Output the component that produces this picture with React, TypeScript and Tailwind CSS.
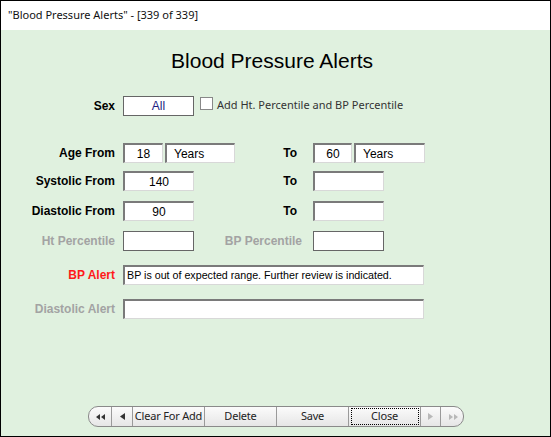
import React from 'react';

const arial = { fontFamily: '"Liberation Sans", Arial, sans-serif' };
const ui = { fontFamily: '"Noto Sans", "Open Sans", sans-serif' };

function Field({ w, children, align = 'center', className = '' }: { w: string; children?: React.ReactNode; align?: 'center' | 'left'; className?: string }) {
  return (
    <div
      className={`${w} h-[20px] bg-white border-t-2 border-l-2 border-t-[#7a7a7a] border-l-[#7a7a7a] border-r border-b border-r-[#d8d8d8] border-b-[#d8d8d8] flex items-center whitespace-nowrap text-black ${align === 'center' ? 'justify-center' : 'justify-start'} ${className}`}
      style={arial}
    >
      {children}
    </div>
  );
}

function Label({ children, color = 'text-black' }: { children: React.ReactNode; color?: string }) {
  return (
    <div className={`w-[114px] text-right font-bold text-[12px] whitespace-nowrap ${color}`} style={arial}>
      {children}
    </div>
  );
}

function Seg({ w, children, focus = false, last = false, dim = false }: { w: string; children: React.ReactNode; focus?: boolean; last?: boolean; dim?: boolean }) {
  return (
    <div className={`${w} h-full shrink-0 flex items-center justify-center whitespace-nowrap ${last ? '' : 'border-r border-[#9a9a9a]'} ${dim ? 'text-[#b0b0b0]' : 'text-[#222]'}`}>
      {focus ? (
        <div className="w-[68px] h-[17px] border border-dotted border-black flex items-center justify-center">{children}</div>
      ) : (
        children
      )}
    </div>
  );
}

export default function App() {
  return (
    <div className="w-[551px] h-[437px] border border-black flex flex-col overflow-hidden">
      <div className="h-[29px] bg-white flex items-center pl-[7px] text-[11px] text-[#111]" style={ui}>
        "Blood Pressure Alerts" - [339 of 339]
      </div>
      <div className="flex-1 bg-[#e0f1df] flex flex-col">
        <h1 className="mt-[19px] pr-[7px] text-center text-[21px] leading-[24px] text-black" style={arial}>
          Blood Pressure Alerts
        </h1>

        {/* Sex */}
        <div className="mt-[23px] flex items-center h-[20px]">
          <Label>Sex</Label>
          <div className="ml-[8px] w-[71px] h-[20px] bg-white border border-[#666] flex items-center justify-center text-[12px] text-[#1c1c80]" style={arial}>
            All
          </div>
          <div className="ml-[6px] w-[13px] h-[13px] border border-[#888] bg-white self-start mt-[1px]" />
          <span className="ml-[4px] text-[11px] text-[#333] -mt-[2px] whitespace-nowrap" style={ui}>
            Add Ht. Percentile and BP Percentile
          </span>
        </div>

        {/* Age */}
        <div className="mt-[27px] flex items-center">
          <Label>Age From</Label>
          <div className="ml-[8px] flex gap-[2px]">
            <Field w="w-[40px]" className="text-[12px] text-[#2a1050]">18</Field>
            <Field w="w-[70px]" align="left" className="text-[12px] pl-[7px]">Years</Field>
          </div>
          <div className="w-[78px] flex justify-end pr-[16px] font-bold text-[12px]" style={arial}>To</div>
          <div className="flex gap-[2px]">
            <Field w="w-[39px]" className="text-[12px]">60</Field>
            <Field w="w-[71px]" align="left" className="text-[12px] pl-[7px]">Years</Field>
          </div>
        </div>

        {/* Systolic */}
        <div className="mt-[8px] flex items-center">
          <Label>Systolic From</Label>
          <div className="ml-[8px]">
            <Field w="w-[71px]" className="text-[12px]">140</Field>
          </div>
          <div className="w-[119px] flex justify-end pr-[16px] font-bold text-[12px]" style={arial}>To</div>
          <Field w="w-[71px]" />
        </div>

        {/* Diastolic */}
        <div className="mt-[10px] flex items-center">
          <Label>Diastolic From</Label>
          <div className="ml-[8px]">
            <Field w="w-[71px]" className="text-[12px]">90</Field>
          </div>
          <div className="w-[119px] flex justify-end pr-[16px] font-bold text-[12px]" style={arial}>To</div>
          <Field w="w-[71px]" />
        </div>

        {/* Percentiles */}
        <div className="mt-[10px] flex items-center">
          <Label color="text-[#a3a3a3]">Ht Percentile</Label>
          <div className="ml-[8px] w-[71px] h-[20px] bg-white border border-[#666]" />
          <div className="w-[119px] flex justify-end pr-[11px] font-bold text-[12px] text-[#a3a3a3] whitespace-nowrap" style={arial}>BP Percentile</div>
          <div className="w-[71px] h-[20px] bg-white border border-[#666]" />
        </div>

        {/* BP Alert */}
        <div className="mt-[14px] flex items-center">
          <Label color="text-[#ff1a1a]">BP Alert</Label>
          <div className="ml-[8px]">
            <Field w="w-[301px]" align="left" className="pl-[2px] text-[10.7px]">
              BP is out of expected range. Further review is indicated.
            </Field>
          </div>
        </div>

        {/* Diastolic Alert */}
        <div className="mt-[14px] flex items-center">
          <Label color="text-[#a3a3a3]">Diastolic Alert</Label>
          <div className="ml-[8px]">
            <Field w="w-[301px]" />
          </div>
        </div>

        {/* Nav bar */}
        <div className="mt-auto mb-[9px] ml-[87px] w-[376px] h-[21px] rounded-[10px] border border-[#8a8a8a] bg-gradient-to-b from-[#fbfbfb] to-[#e6e6e6] flex overflow-hidden text-[11px] tracking-[-0.2px]" style={ui}>
          <Seg w="w-[23px]">
            <svg width="9" height="6" viewBox="0 0 9 6"><path d="M4 0v6L0 3zM9 0v6L5 3z" fill="#333" /></svg>
          </Seg>
          <Seg w="w-[21px]">
            <svg width="5" height="7" viewBox="0 0 5 7"><path d="M5 0v7L0 3.5z" fill="#333" /></svg>
          </Seg>
          <Seg w="w-[72px]">Clear For Add</Seg>
          <Seg w="w-[72px]">Delete</Seg>
          <Seg w="w-[72px]">Save</Seg>
          <Seg w="w-[72px]" focus>Close</Seg>
          <Seg w="w-[20px]" dim>
            <svg width="5" height="7" viewBox="0 0 5 7"><path d="M0 0v7L5 3.5z" fill="#b8b8b8" /></svg>
          </Seg>
          <Seg w="w-[24px]" last dim>
            <svg width="9" height="6" viewBox="0 0 9 6"><path d="M0 0v6L4 3zM5 0v6L9 3z" fill="#b8b8b8" /></svg>
          </Seg>
        </div>
      </div>
    </div>
  );
}
